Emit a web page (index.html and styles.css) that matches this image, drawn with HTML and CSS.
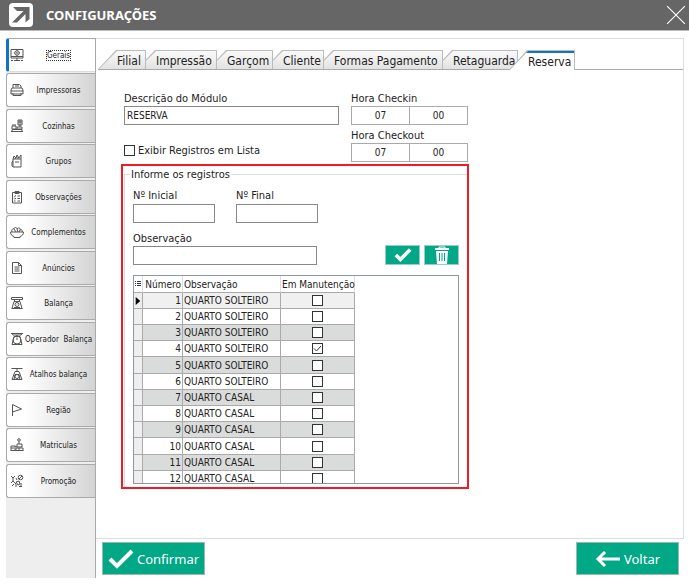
FILE: index.html
```html
<!DOCTYPE html>
<html lang="pt-BR">
<head>
  <meta charset="UTF-8">
  <title>Configurações</title>
  <link rel="stylesheet" href="styles.css">
</head>
<body>
  <header class="titlebar">
    <svg class="logo" viewBox="0 0 24 24">
      <rect width="24" height="24" rx="4" fill="#fff"/>
      <path d="M4 4h16.500v12l-4 3.500V11L8 19.500H3L14.500 8H8z" fill="#666"/>
    </svg>
    <h1>CONFIGURAÇÕES</h1>
    <button class="close" aria-label="Fechar">
      <svg viewBox="0 0 18 18"><path d="M1 1l16 16M17 1L1 17"/></svg>
    </button>
  </header>

  <div class="window">
    <nav class="sidebar">
      <button class="side-tab active">
        <svg viewBox="0 0 14 14"><path d="M1 1.500h12v8.500H1zM1 8.500h12M4 12.500h6M1 12.500h2M11 12.500h2M7 10v2.500"/><circle cx="7" cy="5" r="2.200"/><circle cx="7" cy="5" r=".5"/><path d="M7 2v1M7 7v1M4 5h1M9 5h1"/></svg>
        <span>Gerais</span>
      </button>
      <button class="side-tab">
        <svg viewBox="0 0 14 14"><path d="M3 5V1.500h6.500L11 3v2M2 5h10l1 2v4H1V7zM1 8h12M3 10v2.500h8V10M5 3h4"/></svg>
        <span>Impressoras</span>
      </button>
      <button class="side-tab">
        <svg viewBox="0 0 14 14"><path d="M1 12.500h12M2 10.500h10v2H2zM2 7h4v3H2zM7 8h5v2H7zM8 1h4v5H8zM8 3h4M10 6v2M3 5v2M5 5v2M10 1v5"/></svg>
        <span>Cozinhas</span>
      </button>
      <button class="side-tab">
        <svg viewBox="0 0 14 14"><path d="M3 5h8v8H3zM3 5l1-3 2 2 1-3 2 3 2-3v4M5 5l1-2M8 5V3M5 8h4M3 7l-1 1v4l1 1"/></svg>
        <span>Grupos</span>
      </button>
      <button class="side-tab">
        <svg viewBox="0 0 14 14"><path d="M2.500 2.500h9v10.500h-9zM5 1.500h4v2H5zM4 6l.7.7L6 5.500M7.500 6H10M4 8.500l.7.7L6 8M7.500 8.500H10M4 11h1.500M7.500 11H10"/></svg>
        <span>Observações</span>
      </button>
      <button class="side-tab">
        <svg viewBox="0 0 14 14"><path d="M.5 7h13c0 3-2 4-3.500 4.500v1H4v-1C2.500 11 .5 10 .5 7zM2 7c-1-2 1-4 2-3 0-2 3-2 3 0 1-2 4-1 3 1 2-1 3 1 2 2M4 4l2 3M7 4l1 3M10 5L9 7"/></svg>
        <span>Complementos</span>
      </button>
      <button class="side-tab">
        <svg viewBox="0 0 14 14"><path d="M2.500 1.500h6l3 3v8h-9zM8.500 1.500v3h3M4.500 6h5M4.500 8h5M4.500 10h5"/></svg>
        <span>Anúncios</span>
      </button>
      <button class="side-tab">
        <svg viewBox="0 0 14 14"><path d="M1.500 1.500h11v2h-11zM4 3.500l1 2h4l1-2M4 5.500h6l2 7H2zM1.500 12.500h11"/><circle cx="7" cy="8.500" r="2"/><path d="M7 8.500l1-1M4 11.500h6"/></svg>
        <span>Balança</span>
      </button>
      <button class="side-tab">
        <svg viewBox="0 0 14 14"><path d="M1 1.500h12M2 1.500l1 1.500h8l1-1.500M7 3v1M4 4.500L2 12.500h10l-2-8z"/><circle cx="7" cy="8" r="4"/><path d="M7 8V5.500"/></svg>
        <span>Operador&nbsp; Balança</span>
      </button>
      <button class="side-tab">
        <svg viewBox="0 0 14 14"><path d="M1.500 1.500h11M7 1.500v3M5 4.500h4l3 8H2zM4 12.500l1-5h4l1 5"/><circle cx="7" cy="9.500" r="2"/></svg>
        <span>Atalhos balança</span>
      </button>
      <button class="side-tab">
        <svg viewBox="0 0 14 14"><path d="M2.500 13V1.500L11.500 6 2.500 9"/></svg>
        <span>Região</span>
      </button>
      <button class="side-tab">
        <svg viewBox="0 0 14 14"><circle cx="9" cy="2" r="1.300"/><path d="M9 3.500V6M7 6h5v3H7zM1 8h4v4.500H1zM1 10h3M6 12.500V10h7v2.500M5 8l2 1M.5 12.500h13M9 10v2"/></svg>
        <span>Matriculas</span>
      </button>
      <button class="side-tab">
        <svg viewBox="0 0 14 14"><path d="M1 2l2 2 2-2M3 4v3l-2 2M3 7l3 3v3M6 8l3-1 1 3-2 1zM4 10l-2 2M11 9v3M9 12.500h3"/><circle cx="10.500" cy="3.500" r="2.300"/><path d="M9 5l3-3M6 4l1 2"/></svg>
        <span>Promoção</span>
      </button>
    </nav>

    <main class="main">
      <section class="panel">
        <div class="tabs">
          <button class="tab">Filial</button>
          <button class="tab">Impressão</button>
          <button class="tab">Garçom</button>
          <button class="tab">Cliente</button>
          <button class="tab">Formas Pagamento</button>
          <button class="tab">Retaguarda</button>
          <button class="tab active">Reserva</button>
        </div>

        <form class="form">
          <div class="top-fields">
            <div class="module">
              <label for="descricao">Descrição do Módulo</label>
              <input type="text" id="descricao" value="RESERVA">
              <label class="check"><input type="checkbox" class="box">Exibir Registros em Lista</label>
            </div>
            <div class="hours">
              <label for="checkin">Hora Checkin</label>
              <div class="time">
                <input type="text" id="checkin" value="07">
                <input type="text" aria-label="Minutos do checkin" value="00">
              </div>
              <label for="checkout">Hora Checkout</label>
              <div class="time">
                <input type="text" id="checkout" value="07">
                <input type="text" aria-label="Minutos do checkout" value="00">
              </div>
            </div>
          </div>

          <div class="highlight">
            <fieldset class="registros">
              <legend>Informe os registros</legend>
              <div class="numbers">
                <div class="field">
                  <label for="inicial">Nº Inicial</label>
                  <input type="text" id="inicial">
                </div>
                <div class="field">
                  <label for="final">Nº Final</label>
                  <input type="text" id="final">
                </div>
              </div>
              <div class="obs-row">
                <div class="field obs">
                  <label for="obs">Observação</label>
                  <input type="text" id="obs">
                </div>
                <div class="actions">
                  <button type="button" class="action" aria-label="Adicionar">
                    <svg viewBox="0 0 20 16"><path d="M2 8l5 5L18 2" fill="none" stroke="#fff" stroke-width="4"/></svg>
                  </button>
                  <button type="button" class="action" aria-label="Excluir">
                    <svg viewBox="0 0 16 18"><path d="M5 2V1h6v1" fill="none" stroke="#fff"/><path d="M1 2h14v2H1zM2 5h12l-1 13H3z" fill="#fff"/><path d="M5.500 7v8M8 7v8M10.500 7v8" stroke="#00a885" stroke-width="1"/></svg>
                  </button>
                </div>
              </div>

              <div class="grid-box">
                <table class="grid">
                  <thead>
                    <tr>
                      <th class="mark"><svg viewBox="0 0 6 8"><path d="M0 1.500h1M2 1.500h4M0 3.500h1M2 3.500h4M0 5.500h1M2 5.500h4" stroke="#333"/></svg></th>
                      <th class="num">Número</th>
                      <th class="desc">Observação</th>
                      <th class="manut">Em Manutenção</th>
                    </tr>
                  </thead>
                  <tbody id="rows"></tbody>
                </table>
              </div>
            </fieldset>
          </div>
        </form>
      </section>

      <footer class="footer">
        <button class="btn">
          <svg viewBox="0 0 26 20"><path d="M2 10l7 7L24 2" fill="none" stroke="#fff" stroke-width="4"/></svg>
          Confirmar
        </button>
        <button class="btn back">
          <svg viewBox="0 0 26 20"><path d="M10 3L3 10l7 7M3 10h22" fill="none" stroke="#fff" stroke-width="3"/></svg>
          Voltar
        </button>
      </footer>
    </main>
  </div>

  <script>
    const emManutencao = [4];
    const rows = document.getElementById("rows");

    for (let n = 1; n <= 12; n++) {
      const tipo = n <= 6 ? "QUARTO SOLTEIRO" : "QUARTO CASAL";
      const checked = emManutencao.includes(n) ? "checked" : "";
      const arrow = n === 1 ? '<svg viewBox="0 0 4 7"><path d="M0 0l4 3.500L0 7z"/></svg>' : "";
      rows.innerHTML += `<tr>
        <td class="mark">${arrow}</td>
        <td class="num">${n}</td>
        <td class="desc">${tipo}</td>
        <td class="manut"><input type="checkbox" class="box" aria-label="Em Manutenção ${n}" ${checked}></td>
      </tr>`;
    }
  </script>
</body>
</html>
```

FILE: styles.css
```css
* {
  box-sizing: border-box;
}
body {
  margin: 0;
  background: #fff;
  color: #222;
  font-family: "DejaVu Sans Condensed", "Noto Sans", sans-serif;
  font-size: 11px;
}
button, input {
  font-family: inherit;
  color: inherit;
}
svg {
  display: block;
}

/* title bar */
.titlebar {
  display: flex;
  align-items: center;
  height: 31px;
  padding: 0 3px 0 9px;
  background: #666;
  border-bottom: 1px solid #bbb;
}
.logo {
  width: 24px;
  height: 24px;
}
.titlebar h1 {
  flex: 1;
  margin: 0 0 0 13px;
  color: #fff;
  font-family: "Noto Sans", sans-serif;
  font-size: 13px;
  font-weight: bold;
}
.close {
  padding: 0;
  background: none;
  border: 0;
}
.close svg {
  width: 20px;
  height: 20px;
  fill: none;
  stroke: #fff;
}

.window {
  display: flex;
  padding: 7px 5px 7px 6px;
  border-bottom: 1px solid #eee;
}

/* left menu */
.sidebar {
  flex: 0 0 90px;
  min-width: 0;
  background: #eee;
  border-right: 1px solid #aaa;
}
.side-tab {
  display: grid;
  grid-template-columns: 14px 1fr;
  align-items: center;
  width: 100%;
  height: 34px;
  margin: 0 0 1px;
  padding: 0 2px 0 3px;
  background: linear-gradient(to right, #fff 20%, #d4d4d4);
  border: 1px solid #aaa;
  border-right: 0;
  border-radius: 3px 0 0 3px;
  font-size: 8px;
  white-space: nowrap;
}
.side-tab:nth-child(even) {
  margin-bottom: 2px;
}
.side-tab.active {
  background: #fff;
  border-left: 3px solid #0f74c8;
  padding-left: 1px;
  border-bottom-color: #ddd;
}
.side-tab svg {
  width: 14px;
  height: 14px;
  fill: none;
  stroke: #555;
  stroke-width: 1;
}
.side-tab span {
  justify-self: center;
}
.side-tab.active span {
  outline: 1px dotted #333;
}

.main {
  flex: 1;
  min-width: 0;
}
.panel {
  height: 501px;
  padding: 11px 0 0 2px;
  border: 1px solid #ddd;
  border-left: 0;
}

/* page tabs, each one tucked under the one before it */
.tabs {
  display: grid;
  grid-template-columns: 39px 71px 56px 51px 119px 75px 66px;
  border-bottom: 1px solid #aaa;
}
.tab {
  position: relative;
  height: 19px;
  margin: 0 -9px 0 0;
  padding: 3px 0 0 19px;
  background: #bbb;
  border: 0;
  clip-path: polygon(0 100%, 18px 0, 100% 0, 100% 100%);
  font-size: 12px;
  line-height: 16px;
  text-align: left;
  white-space: nowrap;
  isolation: isolate;
}
.tab::before {
  content: "";
  position: absolute;
  inset: 1px 1px 0 1px;
  background: linear-gradient(#fafafa, #e2e2e2);
  clip-path: polygon(0 100%, 18px 0, 100% 0, 100% 100%);
  z-index: -1;
}
.tab:nth-child(1) { z-index: 6; }
.tab:nth-child(2) { z-index: 5; }
.tab:nth-child(3) { z-index: 4; }
.tab:nth-child(4) { z-index: 3; }
.tab:nth-child(5) { z-index: 2; }
.tab:nth-child(6) { z-index: 1; }
.tab.active {
  z-index: 7;
  height: 20px;
  margin: 0 0 -1px;
}
.tab.active::before {
  background: #fff;
  border-top: 2px solid #0f74c8;
}

/* form */
.form {
  width: 348px;
  margin: 21px 0 0 23px;
}
.top-fields {
  display: flex;
  justify-content: space-between;
  padding: 0 1px 0 3px;
}
label {
  display: block;
  height: 15px;
  line-height: 15px;
  white-space: nowrap;
}
input[type="text"] {
  display: block;
  width: 100%;
  height: 19px;
  padding: 0 2px;
  background: #fff;
  border: 1px solid #888;
  border-radius: 0;
  font-size: 10px;
}
.module {
  width: 215px;
}
.check {
  display: flex;
  align-items: center;
  gap: 3px;
  margin-top: 18px;
}
.hours {
  width: 117px;
}
.time {
  display: flex;
  margin-bottom: 3px;
}
.time:last-child {
  margin-bottom: 2px;
}
.time input[type="text"] {
  border-color: #aaa;
  text-align: center;
}
.time input + input {
  margin-left: -1px;
}
.box {
  appearance: none;
  display: block;
  width: 11px;
  height: 11px;
  margin: 0;
  background: #fff;
  border: 1px solid #333;
}
.box:checked {
  background: #fff url("data:image/svg+xml,%3Csvg xmlns='http://www.w3.org/2000/svg' viewBox='0 0 9 9'%3E%3Cpath d='M1 4.500l2.500 2.500L8 2' fill='none' stroke='%23333'/%3E%3C/svg%3E");
}

.highlight {
  border: 2px solid #ee1c24;
}
.registros {
  min-width: 0;
  margin: 1px 0 0 1px;
  padding: 6px 8px 3px;
  border: 1px solid #ddd;
  border-width: 1px 0 0 1px;
}
.registros legend {
  margin-left: -3px;
  padding: 0 1px;
  line-height: 15px;
}
.numbers {
  display: flex;
  gap: 21px;
}
.numbers .field {
  width: 82px;
}
.numbers label {
  height: 16px;
}
.obs-row {
  display: flex;
  justify-content: space-between;
  align-items: flex-end;
  margin-top: 8px;
}
.obs {
  width: 184px;
}
.actions {
  display: flex;
  gap: 4px;
}
.action {
  display: flex;
  align-items: center;
  justify-content: center;
  width: 35px;
  height: 20px;
  padding: 0;
  background: #00a885;
  border: 1px solid #9cc;
}
.action svg {
  width: 18px;
  height: 18px;
}

/* records grid */
.grid-box {
  height: 209px;
  margin-top: 10px;
  overflow: hidden;
  border: 1px solid #8b97a3;
}
.grid {
  width: 221px;
  table-layout: fixed;
  border-collapse: separate;
  border-spacing: 0;
  font-size: 10px;
}
.grid th, .grid td {
  height: 16px;
  padding: 0 1px;
  border-right: 1px solid #aaa;
  border-bottom: 1px solid #aaa;
  line-height: 15px;
  white-space: nowrap;
}
.grid th {
  height: 17px;
  border-right-color: #ddd;
  font-weight: normal;
  text-align: left;
}
.grid tbody tr:nth-child(odd) {
  background: #dadcdb;
}
.grid tbody tr:first-child {
  background: #f0f0f0;
}
.grid tbody tr:nth-child(5n) td {
  height: 17px;
}
.grid .mark {
  width: 9px;
  background: #eee;
}
.grid th.mark {
  background: #fff;
}
.mark svg {
  width: 6px;
  height: 8px;
}
.grid .num {
  width: 40px;
  text-align: right;
}
.grid .desc {
  width: 98px;
}
.grid .manut {
  text-align: center;
}
.manut .box {
  margin: 0 auto;
}

/* bottom buttons */
.footer {
  display: flex;
  justify-content: space-between;
  padding: 3px 5px 3px 6px;
}
.btn {
  display: flex;
  align-items: center;
  justify-content: center;
  gap: 3px;
  width: 103px;
  height: 33px;
  padding: 0;
  background: #00a885;
  border: 1px solid #9cb8b0;
  color: #fff;
  font-family: "Noto Sans", sans-serif;
  font-size: 13px;
}
.btn svg {
  width: 26px;
  height: 20px;
}
```
